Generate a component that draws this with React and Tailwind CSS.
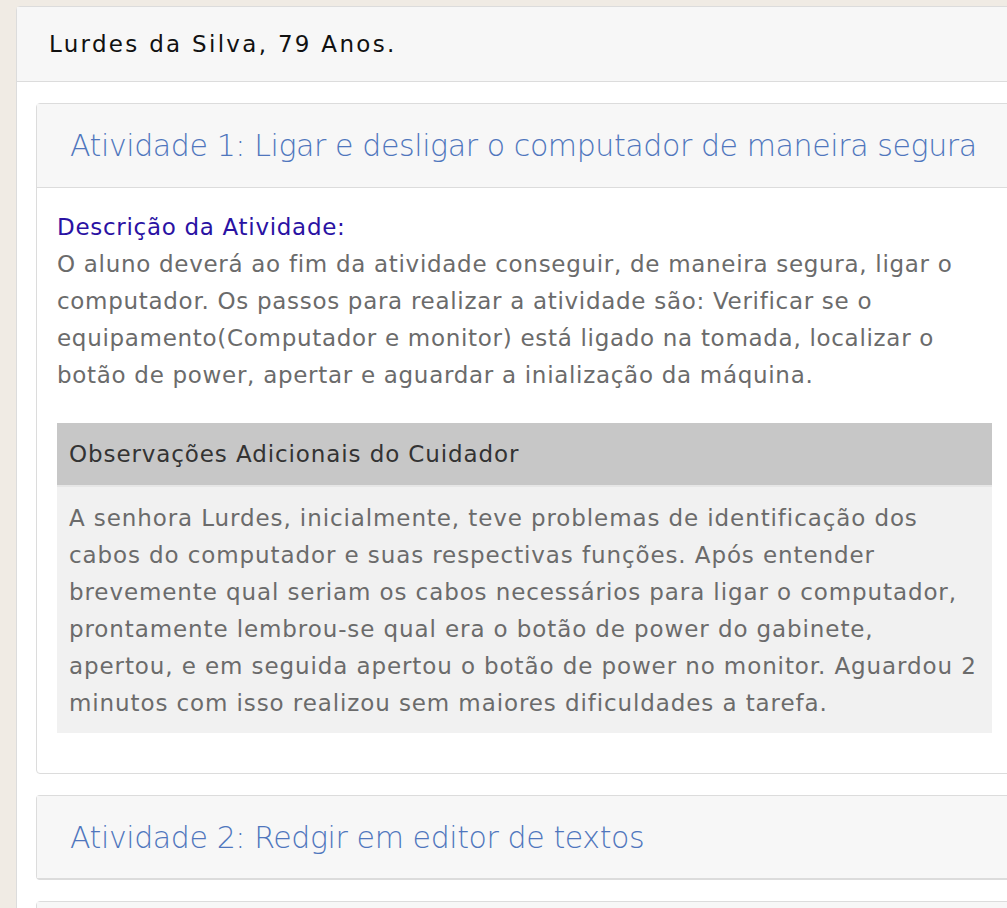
import React from "react";

const font = { fontFamily: '"DejaVu Sans", "Open Sans", sans-serif' };

export default function App() {
  return (
    <div
      className="w-[1007px] h-[908px] overflow-hidden bg-[#f0ebe4] pl-[16px] pt-[6px]"
      style={font}
    >
      <div className="w-[1030px] bg-white border border-[#dcdcdc] rounded-[4px]">
        <div className="h-[75px] bg-[#f7f7f7] border-b border-[#dcdcdc] pl-[32px] flex items-center">
          <span className="text-[23px] tracking-[2.3px] text-[#111]">Lurdes da Silva, 79 Anos.</span>
        </div>
        <div className="pl-[19px] pt-[21px] flex flex-col gap-[21px]">
          <div className="w-[980px] border border-[#dcdcdc] rounded-[4px]">
            <div className="h-[84px] bg-[#f7f7f7] border-b border-[#dcdcdc] pl-[33px] flex items-center">
              <span className="text-[30px] font-light tracking-[-0.4px] text-[#4f76bd]">
                Atividade 1: Ligar e desligar o computador de maneira segura
              </span>
            </div>
            <div className="pl-[20px] pr-[23px] pt-[20px] pb-[40px]">
              <div className="text-[23px] tracking-[0.7px] text-[#2a12a3] leading-[38px]">Descrição da Atividade:</div>
              <p className="text-[23px] tracking-[0.7px] text-[#6b6b6b] leading-[37px] whitespace-nowrap">
                O aluno deverá ao fim da atividade conseguir, de maneira segura, ligar o<br />
                computador. Os passos para realizar a atividade são: Verificar se o<br />
                equipamento(Computador e monitor) está ligado na tomada, localizar o<br />
                botão de power, apertar e aguardar a inialização da máquina.
              </p>
              <div className="mt-[29px]">
                <div className="h-[64px] bg-[#c7c7c7] pl-[12px] flex items-center border-b-[2px] border-[#e6e6e6]">
                  <span className="text-[23px] tracking-[0.9px] text-[#333]">Observações Adicionais do Cuidador</span>
                </div>
                <div className="bg-[#f1f1f1] pl-[12px] pt-[13px] pb-[11px]">
                  <p className="text-[23px] tracking-[0.9px] text-[#6b6b6b] leading-[37px] whitespace-nowrap">
                    A senhora Lurdes, inicialmente, teve problemas de identificação dos<br />
                    cabos do computador e suas respectivas funções. Após entender<br />
                    brevemente qual seriam os cabos necessários para ligar o computador,<br />
                    prontamente lembrou-se qual era o botão de power do gabinete,<br />
                    apertou, e em seguida apertou o botão de power no monitor. Aguardou 2<br />
                    minutos com isso realizou sem maiores dificuldades a tarefa.
                  </p>
                </div>
              </div>
            </div>
          </div>
          <div className="w-[980px] border border-[#dcdcdc] border-b-[2px] rounded-[4px]">
            <div className="h-[82px] bg-[#f7f7f7] pl-[33px] flex items-center">
              <span className="text-[30px] font-light tracking-[-0.4px] text-[#4f76bd]">
                Atividade 2: Redgir em editor de textos
              </span>
            </div>
          </div>
          <div className="w-[980px] border border-[#dcdcdc] rounded-[4px]">
            <div className="h-[83px] bg-[#f7f7f7]"></div>
          </div>
        </div>
      </div>
    </div>
  );
}
